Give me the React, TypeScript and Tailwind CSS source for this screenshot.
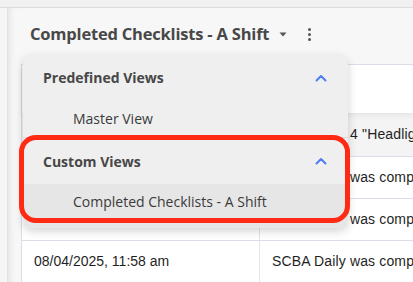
import React from 'react';

const rows = [
  { date: '08/04/2025, 12:40 pm', text: 'Engine Unit 4 "Headlights" needs repair', shade: true },
  { date: '08/04/2025, 12:31 pm', text: 'SCBA Daily was completed', shade: false },
  { date: '08/04/2025, 12:05 pm', text: 'SCBA Daily was completed', shade: false },
  { date: '08/04/2025, 11:58 am', text: 'SCBA Daily was completed', shade: false },
];

const ChevronUp = () => (
  <svg width="12" height="8" viewBox="0 0 12 8" fill="none">
    <path d="M1.5 6.5 L6 2 L10.5 6.5" stroke="#4d7df5" strokeWidth="2" strokeLinecap="round" strokeLinejoin="round" />
  </svg>
);

export default function App() {
  return (
    <div className="relative w-[413px] h-[282px] overflow-hidden bg-[#f1f1f1] font-['Open_Sans',sans-serif]">
      <div className="h-2 border-b border-[#dcdcdc]" />
      <div className="flex h-[274px]">
        <div className="w-2 shrink-0 border-r border-[#e2e2e2] bg-[#f5f5f5]" />
        <div className="flex-1 min-w-0 flex flex-col bg-[#f7f7f7] shadow-[inset_6px_0_8px_-6px_rgba(0,0,0,0.12)]">
          {/* Header */}
          <div className="h-[56px] shrink-0 flex items-center pl-[22px] pb-1">
            <span className="text-[16.5px] font-bold text-[#484848] tracking-[-0.2px] whitespace-nowrap">Completed Checklists - A Shift</span>
            <svg className="ml-[10px] shrink-0" width="8" height="5" viewBox="0 0 8 5">
              <path d="M0.5 0.5 L7.5 0.5 L4 4.5 Z" fill="#555" />
            </svg>
            <div className="ml-[21px] flex flex-col gap-[2px] shrink-0">
              <span className="w-[3px] h-[3px] rounded-full bg-[#555]" />
              <span className="w-[3px] h-[3px] rounded-full bg-[#555]" />
              <span className="w-[3px] h-[3px] rounded-full bg-[#555]" />
            </div>
          </div>
          {/* Table */}
          <div className="ml-[13px] flex-1 bg-white border-l border-t border-[#dcdde6] font-['Liberation_Sans',Arial,sans-serif] text-[14px] text-[#1f1f1f]">
            <div className="h-[48px] flex shadow-[0_3px_5px_rgba(0,0,0,0.06)] relative">
              <div className="w-[238px] shrink-0 border-r border-[#e4e4ea]" />
              <div className="flex-1" />
            </div>
            {rows.map((r, i) => (
              <div
                key={i}
                className={`flex ${i === 0 ? 'h-[43px] bg-[#f4f4f4]' : 'h-[42px] border-t border-[#dcdde6]'}`}
              >
                <div className="w-[238px] shrink-0 border-r border-[#e4e4ea] flex items-center pl-3 whitespace-nowrap">
                  {r.date}
                </div>
                <div className="flex-1 min-w-0 flex items-center pl-3 whitespace-nowrap overflow-hidden tracking-[0.15px]">{r.text}</div>
              </div>
            ))}
          </div>
        </div>
      </div>

      {/* Views dropdown */}
      <div className="absolute left-[23px] top-[55px] w-[325px] rounded-[9px] bg-[#efefef] shadow-[0_3px_10px_rgba(0,0,0,0.18)] overflow-hidden text-[14px]">
        <div className="h-[45px] flex items-center justify-between pl-[20px] pr-[21px]">
          <span className="font-bold text-[#474747]">Predefined Views</span>
          <ChevronUp />
        </div>
        <div className="h-[37px] flex items-center pl-[50px] text-[#3a3a3a]">Master View</div>
        <div className="h-[47px] border-t border-[#d9d9d9] flex items-center justify-between pl-[20px] pr-[21px]">
          <span className="font-bold text-[#474747]">Custom Views</span>
          <ChevronUp />
        </div>
        <div className="h-[44px] flex items-start pt-[7px] pl-[50px] bg-[#e6e6e6] text-[#3a3a3a]">Completed Checklists - A Shift</div>
      </div>

      {/* Highlight annotation */}
      <div className="absolute left-[19px] top-[135px] w-[331px] h-[88px] rounded-[17px] border-[5px] border-[#ff2a14]" />
    </div>
  );
}
